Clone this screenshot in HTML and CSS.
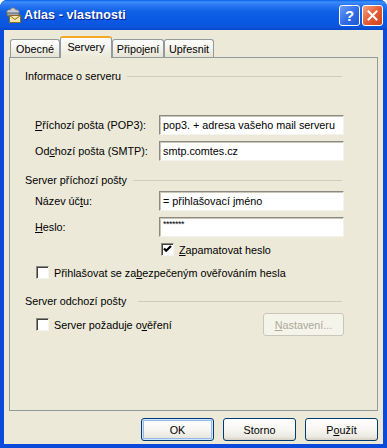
FILE: index.html
```html
<!DOCTYPE html>
<html lang="cs">
<head>
  <meta charset="UTF-8">
  <title>Atlas - vlastnosti</title>
  <link rel="stylesheet" href="styles.css">
</head>
<body>

  <div class="window">
    <div class="titlebar">
      <svg class="title-icon" width="16" height="16" viewBox="0 0 16 16">
        <path d="M2 7 C1 4 3 2 5 3 C6 0 10 0 11 3 C13 2 15 4 14 7 Z" fill="#c9ccd3" stroke="#6d7280" stroke-width="1"/>
        <rect x="2" y="6" width="12" height="3" fill="#a3a8b4" stroke="#5e6370" stroke-width="1"/>
        <rect x="4.5" y="8.5" width="11" height="7" fill="#f6e7a8" stroke="#8a6d22" stroke-width="1"/>
        <path d="M4.5 8.5 L10 12.5 L15.5 8.5" fill="none" stroke="#8a6d22" stroke-width="1"/>
      </svg>
      <div class="title-text">Atlas - vlastnosti</div>
      <div class="caption-btn help">?</div>
      <div class="caption-btn close">
        <svg width="11" height="11" viewBox="0 0 11 11">
          <path d="M1.5 1.5 L9.5 9.5 M9.5 1.5 L1.5 9.5" stroke="#fff" stroke-width="2" stroke-linecap="square"/>
        </svg>
      </div>
    </div>

    <div class="client">
      <div class="tabs">
        <div class="tab tab-obecne">Obecné</div>
        <div class="tab tab-servery active">Servery</div>
        <div class="tab tab-pripojeni">Připojení</div>
        <div class="tab tab-upresnit">Upřesnit</div>
      </div>

      <div class="panel">
        <div class="group-title">Informace o serveru<span class="line"></span></div>
        <div class="fields fields-server">
          <label><u>P</u>říchozí pošta (POP3):</label>
          <div class="edit">pop3. + adresa vašeho mail serveru</div>
          <label>Od<u>c</u>hozí pošta (SMTP):</label>
          <div class="edit">smtp.comtes.cz</div>
        </div>

        <div class="group-title group-in">Server příchozí pošty<span class="line"></span></div>
        <div class="fields fields-account">
          <label>Název úč<u>t</u>u:</label>
          <div class="edit">= přihlašovací jméno</div>
          <label><u>H</u>eslo:</label>
          <div class="edit password">*******</div>
        </div>
        <div class="check-row remember">
          <span class="checkbox">
            <svg width="11" height="11" viewBox="0 0 11 11">
              <path d="M2 4.5 L4.2 6.8 L9 2" fill="none" stroke="#000" stroke-width="2.2"/>
            </svg>
          </span>
          <span><u>Z</u>apamatovat heslo</span>
        </div>
        <div class="check-row spa">
          <span class="checkbox"></span>
          <span>Přihlašovat se za<u>b</u>ezpečeným ověřováním hesla</span>
        </div>

        <div class="group-title group-out">Server odchozí pošty<span class="line"></span></div>
        <div class="out-row">
          <div class="check-row">
            <span class="checkbox"></span>
            <span>Server požaduje o<u>v</u>ěření</span>
          </div>
          <button class="btn" disabled><u>N</u>astavení...</button>
        </div>
      </div>

      <div class="actions">
        <button class="btn default">OK</button>
        <button class="btn">Storno</button>
        <button class="btn">P<u>o</u>užít</button>
      </div>
    </div>
  </div>

</body>
</html>
```

FILE: styles.css
```css
* {
  box-sizing: border-box;
}

body {
  margin: 0;
  font-family: "Liberation Sans", Arial, sans-serif;
  font-size: 10.8px;
  color: #000;
  background: #fff;
}

.window {
  width: 387px;
  height: 448px;
  display: flex;
  flex-direction: column;
  background: #0a4bd9;
  border-radius: 7px 7px 0 0;
  overflow: hidden;
}

/* title bar */
.titlebar {
  height: 30px;
  display: flex;
  align-items: center;
  padding: 0 4px 0 5px;
  background: linear-gradient(#0a5fe8 0, #3d8ffb 2px, #2a78f2 5px, #0f5fe6 12px, #0a58e4 22px, #0b55dc 27px, #0848c8 30px);
  color: #fff;
}

.title-icon {
  margin-right: 3px;
  flex-shrink: 0;
}

.title-text {
  flex: 1;
  font-weight: bold;
  font-size: 12.5px;
  letter-spacing: 0.1px;
  text-shadow: 1px 1px 0 #0a1f8a;
}

.caption-btn {
  width: 21px;
  height: 21px;
  margin-left: 2px;
  border: 1px solid #fff;
  border-radius: 3px;
  display: flex;
  align-items: center;
  justify-content: center;
}

.help {
  background: linear-gradient(135deg, #6a9ef8, #2f6ce6 55%, #1e56d4);
  color: #fff;
  font-weight: bold;
  font-size: 15px;
}

.close {
  background: linear-gradient(135deg, #f4a47f, #e35d35 50%, #cc451c);
}

/* client area */
.client {
  flex: 1;
  display: flex;
  flex-direction: column;
  background: #ece9d8;
  margin: 0 4px 4px;
  padding: 6px 5px 3px;
}

.tabs {
  height: 21px;
  display: flex;
  align-items: flex-end;
  padding-left: 1px;
}

.tab {
  height: 18px;
  display: flex;
  align-items: center;
  justify-content: center;
  border: 1px solid #919b9c;
  border-bottom: none;
  border-radius: 3px 3px 0 0;
  background: linear-gradient(#fff, #f1efe6 60%, #e6e3d4);
}

.tab-obecne { width: 50px; }
.tab-servery { width: 52px; }
.tab-pripojeni { width: 52px; }
.tab-upresnit { width: 50px; }

.tab.active {
  height: 22px;
  margin-bottom: -1px;
  padding-bottom: 2px;
  border-top: 2px solid #f5a623;
  background: linear-gradient(#fcfcfe, #ece9d8);
  position: relative;
  z-index: 1;
}

.panel {
  flex: 1;
  border: 1px solid #919b9c;
  padding: 11px 33px 0 15px;
}

.group-title {
  display: flex;
  align-items: center;
  height: 14px;
}

.group-title .line {
  flex: 1;
  margin-left: 6px;
  margin-right: 2px;
  border-top: 1px solid #d0ccbc;
}

.group-in {
  margin-top: 12px;
}

.group-out {
  margin-top: 15px;
}

.group-out .line {
  margin-left: 12px;
}

.fields {
  display: grid;
  grid-template-columns: 124px 185px;
  grid-auto-rows: 20px;
  row-gap: 6px;
  margin-left: 10px;
  align-items: center;
}

.fields-server {
  margin-top: 32px;
}

.fields-account {
  margin-top: 4px;
}

.edit {
  height: 20px;
  background: #fff;
  border-top: 1px solid #8c8a80;
  border-left: 1px solid #8c8a80;
  border-right: 1px solid #f4f3ee;
  border-bottom: 1px solid #f4f3ee;
  box-shadow: inset 1px 1px 0 #c9c6b8;
  padding: 3px 0 0 3px;
  white-space: nowrap;
  overflow: hidden;
}

.password {
  font-size: 9px;
  padding-top: 1px;
  letter-spacing: -0.5px;
}

.check-row {
  display: flex;
  align-items: center;
  gap: 5px;
  height: 13px;
}

.remember {
  margin: 6px 0 0 136px;
}

.spa {
  margin: 10px 0 0 11px;
}

.checkbox {
  width: 13px;
  height: 13px;
  background: #fff;
  border-top: 1px solid #8c8a80;
  border-left: 1px solid #8c8a80;
  border-right: 1px solid #f4f3ee;
  border-bottom: 1px solid #f4f3ee;
  box-shadow: inset 1px 1px 0 #404040;
  display: flex;
  align-items: center;
  justify-content: center;
}

.out-row {
  display: flex;
  align-items: center;
  justify-content: space-between;
  margin: 5px 0 0 11px;
  height: 23px;
}

/* buttons */
.btn {
  width: 73px;
  height: 23px;
  font-family: inherit;
  font-size: 10.8px;
  color: #000;
  border: 1px solid #003c74;
  border-radius: 3px;
  background: linear-gradient(#fff, #f7f6f2 50%, #ebe9e0 85%, #d6d0c5);
  padding: 0;
}

.btn:disabled {
  width: 81px;
  color: #aca899;
  border-color: #c9c7ba;
  background: #f5f4ea;
}

.btn.default {
  box-shadow: inset 0 0 0 1px #cee7ff, inset 0 0 0 2px #98b8ea;
}

.actions {
  display: flex;
  justify-content: flex-end;
  gap: 9px;
  padding-top: 7px;
}
```
